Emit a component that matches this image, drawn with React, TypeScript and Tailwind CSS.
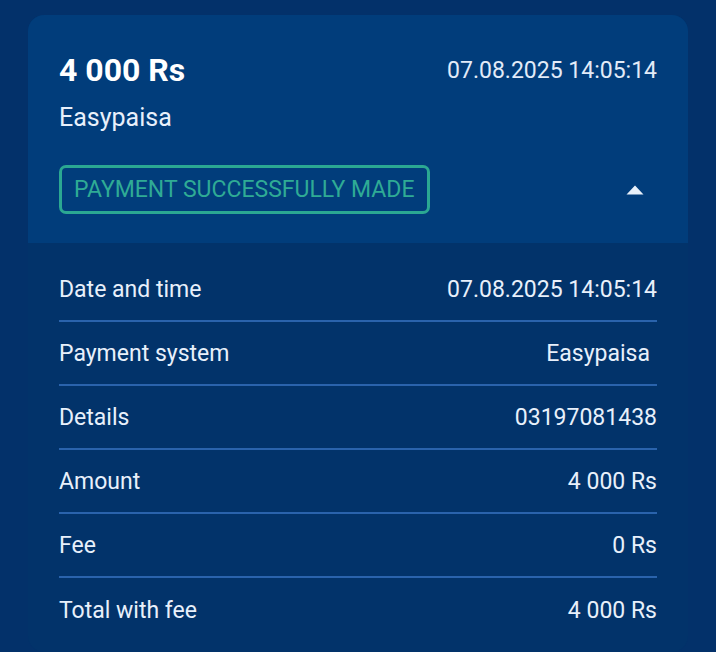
import React from "react";

const rows: { label: string; value: string; trail?: boolean }[] = [
  { label: "Date and time", value: "07.08.2025 14:05:14" },
  { label: "Payment system", value: "Easypaisa", trail: true },
  { label: "Details", value: "03197081438" },
  { label: "Amount", value: "4 000 Rs" },
  { label: "Fee", value: "0 Rs" },
  { label: "Total with fee", value: "4 000 Rs" },
];

export default function App() {
  return (
    <div
      className="w-[716px] h-[652px] overflow-hidden bg-[#03316a] pt-[15px] px-[28px]"
      style={{ fontFamily: "Roboto, 'Liberation Sans', sans-serif" }}
    >
      <div className="w-[660px] h-[637px] rounded-[16px] overflow-hidden bg-[#02336a] flex flex-col">
        <div className="bg-[#013d7b] pt-[36px] pb-[29px] px-[31px]">
          <div className="flex items-center justify-between">
            <div className="text-[32px] leading-[38px] font-bold text-white">4 000 Rs</div>
            <div className="text-[23px] leading-[27px] text-[#e2ebf8]">07.08.2025 14:05:14</div>
          </div>
          <div className="mt-[14px] text-[25px] leading-[30px] text-[#e8f0fb]">Easypaisa</div>
          <div className="mt-[32px] flex items-center justify-between">
            <div className="h-[49px] flex items-center border-[3px] border-[#2ba892] rounded-[7px] px-[12px] text-[23px] leading-[27px] text-[#2fab95]">
              PAYMENT SUCCESSFULLY MADE
            </div>
            <svg width="18" height="10" viewBox="0 0 18 10" className="mr-[13px]">
              <path d="M9 0.5 L17.5 9.5 L0.5 9.5 Z" fill="#e8f0fa" />
            </svg>
          </div>
        </div>
        <div className="px-[31px] pt-[15px] pb-[12px]">
          {rows.map((r, i) => (
            <div
              key={r.label}
              className={`h-[64px] flex items-center justify-between text-[23px] leading-[27px] text-[#e8f0fb] ${
                i < rows.length - 1 ? "border-b-2 border-[#2a63ac]" : ""
              }`}
            >
              <span>{r.label}</span>
              <span className={r.trail ? "mr-[7px]" : ""}>{r.value}</span>
            </div>
          ))}
        </div>
      </div>
    </div>
  );
}
